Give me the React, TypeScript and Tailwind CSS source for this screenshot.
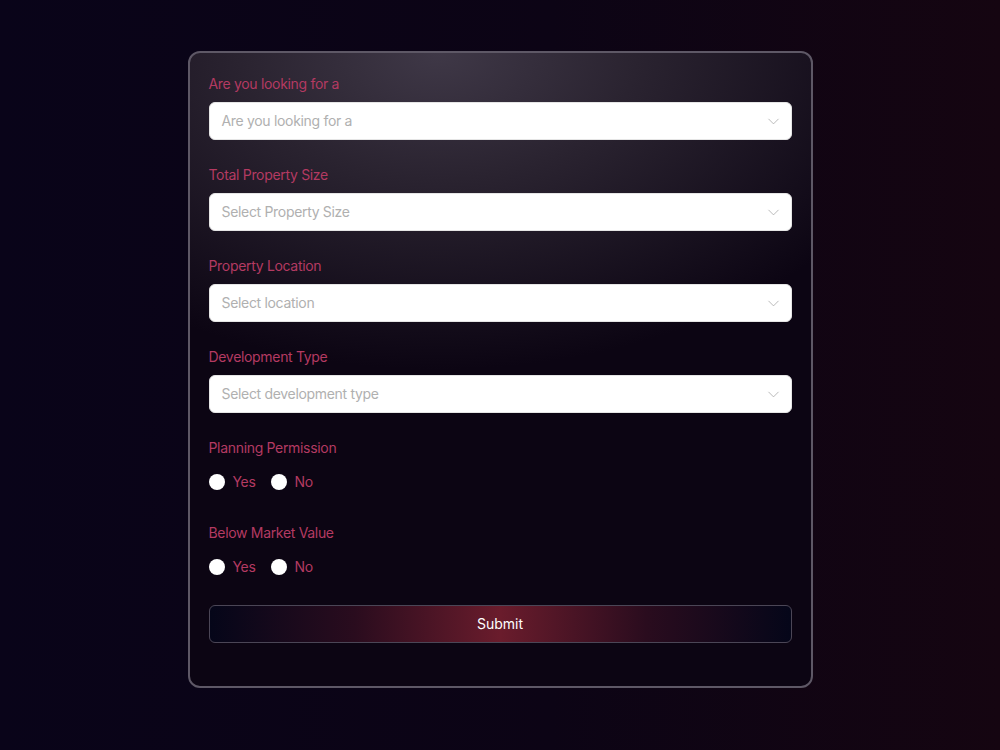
import { ChevronDown } from 'lucide-react';

const SELECTS = [
  { label: 'Are you looking for a', placeholder: 'Are you looking for a' },
  { label: 'Total Property Size', placeholder: 'Select Property Size' },
  { label: 'Property Location', placeholder: 'Select location' },
  { label: 'Development Type', placeholder: 'Select development type' },
];

const RADIOS = ['Planning Permission', 'Below Market Value'];

function SelectField({ label, placeholder }: { label: string; placeholder: string }) {
  return (
    <div className="mb-6">
      <label className="block text-sm leading-[21px] text-[#b43a62] mb-2">{label}</label>
      <div className="h-[38px] bg-white rounded-md border border-[#e5e5e5] flex items-center justify-between pl-3 pr-[8px]">
        <span className="text-sm text-[#b0b0b0]">{placeholder}</span>
        <ChevronDown className="w-[19px] h-[19px] text-[#a8a8a8]" strokeWidth={1} />
      </div>
    </div>
  );
}

function RadioField({ label, last }: { label: string; last?: boolean }) {
  return (
    <div className={last ? 'mb-[28px]' : 'mb-[30px]'}>
      <div className="text-sm leading-[21px] text-[#b43a62] mb-[14px]">{label}</div>
      <div className="flex items-center gap-[15px] h-5">
        {['Yes', 'No'].map((opt) => (
          <label key={opt} className="flex items-center gap-2">
            <span className="w-4 h-4 rounded-full bg-white" />
            <span className="text-sm text-[#b43a62]">{opt}</span>
          </label>
        ))}
      </div>
    </div>
  );
}

export default function App() {
  return (
    <div
      className="min-h-[750px] w-full bg-[linear-gradient(to_right,#090419,#0c0415_55%,#150511)] pt-[51px] tracking-[-0.02em]"
      style={{ fontFamily: 'Inter, "Noto Sans", sans-serif' }}
    >
      <div className="mx-auto w-[625px] rounded-xl border-2 border-[#5e5866] bg-[radial-gradient(ellipse_80%_50%_at_40%_0%,#3f3847_0%,#2a2330_40%,#0c0513_100%)] px-[19px] pt-5 pb-[43px]">
        {SELECTS.map((s) => (
          <SelectField key={s.label} label={s.label} placeholder={s.placeholder} />
        ))}

        {RADIOS.map((r, i) => (
          <RadioField key={r} label={r} last={i === RADIOS.length - 1} />
        ))}

        <button className="w-full h-[38px] rounded-md border border-[#4b4656] bg-[linear-gradient(to_right,#050619_0%,#2a0c1e_25%,#6a1c2c_50%,#2a0c1e_75%,#050619_100%)] text-sm text-white tracking-normal">
          Submit
        </button>
      </div>
    </div>
  );
}
